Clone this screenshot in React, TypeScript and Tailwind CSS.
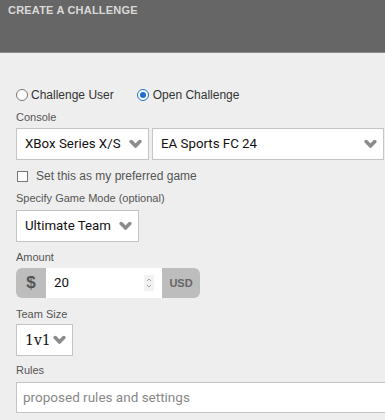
const arial = "font-['Liberation_Sans',Arial,sans-serif]";
const roboto = "font-['Roboto','Liberation_Sans',Arial,sans-serif]";

function Chevron() {
  return (
    <svg width="13" height="10" viewBox="0 0 13 10" fill="none">
      <path
        d="M2.2 2.6 L6.5 7 L10.8 2.6"
        stroke="#8c8c8c"
        strokeWidth="3.6"
        strokeLinecap="round"
        strokeLinejoin="round"
      />
    </svg>
  );
}

function Select({
  value,
  className = "",
  textClass = "",
}: {
  value: string;
  className?: string;
  textClass?: string;
}) {
  return (
    <div
      className={`flex h-[32px] items-center justify-between border border-[#c4c4c4] bg-white pl-[8px] pr-[6px] ${className}`}
    >
      <span className={`whitespace-nowrap text-[#111] ${textClass || `${roboto} text-[13.3px]`}`}>
        {value}
      </span>
      <Chevron />
    </div>
  );
}

function Label({ children, className = "" }: { children: React.ReactNode; className?: string }) {
  return (
    <div className={`h-[14px] text-[11px] leading-[14px] text-[#555] ${className}`}>
      {children}
    </div>
  );
}

export default function App() {
  return (
    <div className={`h-[420px] w-[385px] overflow-hidden bg-[#eeeeee] ${arial}`}>
      {/* header */}
      <div className="h-[53px] border-b border-[#8a8a8a] bg-[#666666] px-[8px] pt-[3px]">
        <h1 className="text-[11px] font-bold leading-[14px] tracking-[0.2px] text-[#d9d9d9]">
          CREATE A CHALLENGE
        </h1>
      </div>

      <div className="pl-[16px] pt-[34px]">
        {/* challenge type */}
        <div className="flex h-[16px] items-center text-[12px] text-[#333]">
          <label className="flex items-center">
            <span className="h-[12px] w-[12px] rounded-full border border-[#777] bg-white" />
            <span className="ml-[3px]">Challenge User</span>
          </label>
          <label className="ml-[23px] flex items-center">
            <span className="flex h-[12px] w-[12px] items-center justify-center rounded-full border-[1.5px] border-[#1e6fd0] bg-white">
              <span className="h-[6px] w-[6px] rounded-full bg-[#1e6fd0]" />
            </span>
            <span className="ml-[4px]">Open Challenge</span>
          </label>
        </div>

        <Label className="mt-[7px]">Console</Label>
        <div className="mt-[4px] flex gap-[3px]">
          <Select value="XBox Series X/S" className="w-[133px]" />
          <Select value="EA Sports FC 24" className="w-[232px]" />
        </div>

        <label className="mt-[8px] flex h-[16px] items-center text-[12px] text-[#555]">
          <span className="ml-[1px] h-[11px] w-[11px] border border-[#777] bg-white" />
          <span className="ml-[8px]">Set this as my preferred game</span>
        </label>

        <Label className="mt-[7px]">Specify Game Mode (optional)</Label>
        <Select value="Ultimate Team" className="mt-[5px] w-[123px]" />

        <Label className="mt-[8px]">Amount</Label>
        <div className="mt-[4px] flex h-[30px] w-[184px]">
          <div className="flex w-[30px] items-center justify-center rounded-l-[6px] bg-[#bdbdbd] text-[17px] font-bold text-[#555]">
            $
          </div>
          <div className="flex w-[116px] items-center justify-between bg-white pl-[8px] pr-[8px]">
            <span className={`${roboto} text-[13.3px] text-[#111]`}>20</span>
            <svg width="10" height="16" viewBox="0 0 10 16" fill="none">
              <rect width="10" height="16" fill="#f2f2f2" />
              <path d="M3 6 L5 4 L7 6 M3 10 L5 12 L7 10" stroke="#a0a0a0" strokeWidth="1" />
            </svg>
          </div>
          <div className="flex w-[38px] items-center justify-center rounded-r-[6px] bg-[#bdbdbd] text-[11px] font-bold text-[#666]">
            USD
          </div>
        </div>

        <Label className="mt-[9px]">Team Size</Label>
        <Select
          value="1v1"
          className="mt-[3px] w-[57px]"
          textClass="font-['DejaVu_Serif',serif] text-[14px]"
        />

        <Label className="mt-[7px]">Rules</Label>
        <div
          className={`mt-[5px] flex h-[31px] w-[380px] items-center border border-[#c4c4c4] bg-white pl-[6px] text-[13.5px] text-[#888] ${roboto}`}
        >
          proposed rules and settings
        </div>
      </div>
    </div>
  );
}
